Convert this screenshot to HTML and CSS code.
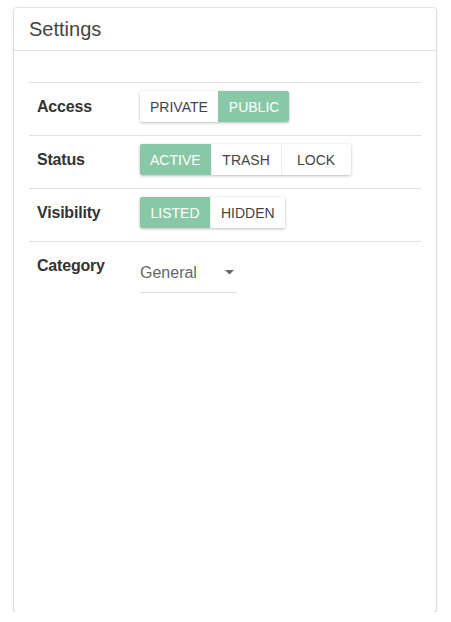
FILE: index.html
```html
<!DOCTYPE html>
<html>
<head>
<meta charset="utf-8">
<link rel="stylesheet" href="styles.css">
</head>
<body>
<div class="card">
  <div class="card-header">Settings</div>
  <div class="card-body">
    <div class="rows">
      <div class="row">
        <div class="label">Access</div>
        <div class="value">
          <div class="toggle">
            <span class="btn">PRIVATE</span><span class="btn on">PUBLIC</span>
          </div>
        </div>
      </div>
      <div class="row">
        <div class="label">Status</div>
        <div class="value">
          <div class="toggle">
            <span class="btn on">ACTIVE</span><span class="btn">TRASH</span><span class="btn">LOCK</span>
          </div>
        </div>
      </div>
      <div class="row">
        <div class="label">Visibility</div>
        <div class="value">
          <div class="toggle">
            <span class="btn on">LISTED</span><span class="btn">HIDDEN</span>
          </div>
        </div>
      </div>
      <div class="row last">
        <div class="label">Category</div>
        <div class="value">
          <div class="select">
            <span class="sel-text">General</span>
            <svg class="caret" width="9" height="5" viewBox="0 0 9 5"><path d="M0 0 L9 0 L4.5 4.5 Z" fill="#666"/></svg>
          </div>
        </div>
      </div>
    </div>
  </div>
</div>
</body>
</html>
```
FILE: styles.css
```css
html, body {
  margin: 0;
  padding: 0;
  background: #fff;
}
body {
  padding: 8px 14px 0 14px;
  font-family: "Liberation Sans", Arial, sans-serif;
  color: #333;
}
.card {
  width: 422px;
  height: 604px;
  box-sizing: border-box;
  border-radius: 3px;
  background: #fff;
  box-shadow: 0 0 0 1px rgba(0,0,0,0.08), 0 1px 3px rgba(0,0,0,0.18);
}
.card-header {
  height: 43px;
  box-sizing: border-box;
  border-bottom: 1px solid #e0e0e0;
  padding: 9px 15px 0 15px;
  font-size: 20px;
  line-height: 24px;
  color: #444;
}
.card-body {
  padding: 31px 15px 0 15px;
}
.rows {
  border-top: 1px solid #e0e0e0;
}
.row {
  display: flex;
  align-items: flex-start;
  padding: 8px 8px 13px 8px;
  border-bottom: 1px solid #e0e0e0;
  height: 31px;
}
.row.last {
  border-bottom: none;
}
.label {
  width: 103px;
  font-size: 16px;
  font-weight: bold;
  line-height: 31px;
  color: #333;
  letter-spacing: -0.2px;
}
.value {
  display: flex;
}
.toggle {
  display: flex;
  height: 31px;
  border-radius: 2px;
  box-shadow: 0 1px 3px rgba(0,0,0,0.25), 0 0 1px rgba(0,0,0,0.15);
  overflow: hidden;
}
.btn {
  display: flex;
  align-items: center;
  justify-content: center;
  min-width: 70px;
  box-sizing: border-box;
  padding: 0 10px;
  font-size: 14px;
  color: #444;
  background: #fff;
  border-left: 1px solid #eee;
}
.btn:first-child {
  border-left: none;
}
.btn.on {
  background: #88c8a6;
  color: #fff;
  border-left-color: #88c8a6;
}
.select {
  margin-top: 8px;
  width: 97px;
  height: 35px;
  box-sizing: border-box;
  border-bottom: 1px solid #ddd;
  display: flex;
  align-items: flex-start;
  justify-content: space-between;
  padding-top: 6px;
}
.sel-text {
  font-size: 16px;
  line-height: 18px;
  color: #666;
}
.caret {
  margin-top: 6px;
  margin-right: 3px;
}
```
